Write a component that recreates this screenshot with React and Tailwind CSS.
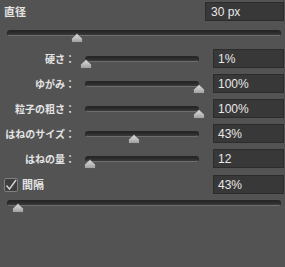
import React from 'react'

const jp = { fontFamily: '"Noto Sans CJK JP", "Noto Sans", sans-serif' }
const num = { fontFamily: '"Liberation Sans", Arial, sans-serif' }

function Thumb({ pos }) {
  return (
    <svg
      width="12"
      height="10"
      viewBox="0 0 12 10"
      className="absolute top-[3px] -ml-[6px]"
      style={{ left: pos }}
    >
      <defs>
        <linearGradient id="thumbFill" x1="0" y1="0" x2="0" y2="1">
          <stop offset="0" stopColor="#e2e2e2" />
          <stop offset="1" stopColor="#9c9c9c" />
        </linearGradient>
      </defs>
      <path
        d="M6 0.5 L11.5 5.5 L11.5 8.5 Q11.5 9.5 10.5 9.5 L1.5 9.5 Q0.5 9.5 0.5 8.5 L0.5 5.5 Z"
        fill="url(#thumbFill)"
        stroke="#404040"
        strokeWidth="0.6"
      />
    </svg>
  )
}

function Slider({ value, className }) {
  return (
    <div className={'relative h-[6px] ' + className}>
      <div className="h-full rounded-full border border-[#262626] border-b-[#6e6e6e] bg-gradient-to-b from-[#242424] to-[#3a3a3a]" />
      <Thumb pos={value + '%'} />
    </div>
  )
}

function ValueBox({ children, className }) {
  return (
    <div
      className={
        'flex h-[19px] items-center border border-[#2c2c2c] bg-[#383838] text-[12px] text-[#e8e8e8] ' + className
      }
      style={num}
    >
      {children}
    </div>
  )
}

const rows = [
  { label: '硬さ：', value: 1, text: '1%' },
  { label: 'ゆがみ：', value: 100, text: '100%' },
  { label: '粒子の粗さ：', value: 100, text: '100%' },
  { label: 'はねのサイズ：', value: 43, text: '43%' },
  { label: 'はねの量：', value: 4.5, text: '12' },
]

export default function App() {
  return (
    <div className="h-[267px] w-[285px] overflow-hidden bg-[#535353] pt-[2px] text-[#e4e4e4]">
      <div className="flex h-[19px] items-center justify-between">
        <span className="pl-[4px] text-[11px] font-bold" style={jp}>
          直径
        </span>
        <ValueBox className="mr-[1px] w-[79px] pl-[5px]">30 px</ValueBox>
      </div>

      <Slider value={25.5} className="mx-[4px] ml-[7px] mt-[9px]" />

      <div className="mt-[13px] flex flex-col gap-[6px]">
        {rows.map((r) => (
          <div key={r.label} className="flex h-[19px] items-center">
            <span className="w-[75px] text-right text-[10px] font-bold" style={jp}>
              {r.label}
            </span>
            <Slider value={r.value} className="ml-[10px] w-[114px]" />
            <ValueBox className="ml-[14px] w-[71px] pl-[4px]">{r.text}</ValueBox>
          </div>
        ))}
      </div>

      <div className="mt-[7px] flex h-[19px] items-center">
        <div className="ml-[4px] flex h-[14px] w-[14px] items-center justify-center rounded-[2px] border border-[#808080] bg-[#3e3e3e]">
          <svg width="12" height="12" viewBox="0 0 12 12">
            <path d="M1.5 6.5 L4.5 10 L11 1" fill="none" stroke="#d0d0d0" strokeWidth="1.5" />
          </svg>
        </div>
        <span className="ml-[4px] text-[11px] font-bold" style={jp}>
          間隔
        </span>
        <ValueBox className="ml-auto mr-[1px] w-[71px] pl-[4px]">43%</ValueBox>
      </div>

      <Slider value={4} className="mx-[4px] ml-[7px] mt-[6px]" />
    </div>
  )
}
